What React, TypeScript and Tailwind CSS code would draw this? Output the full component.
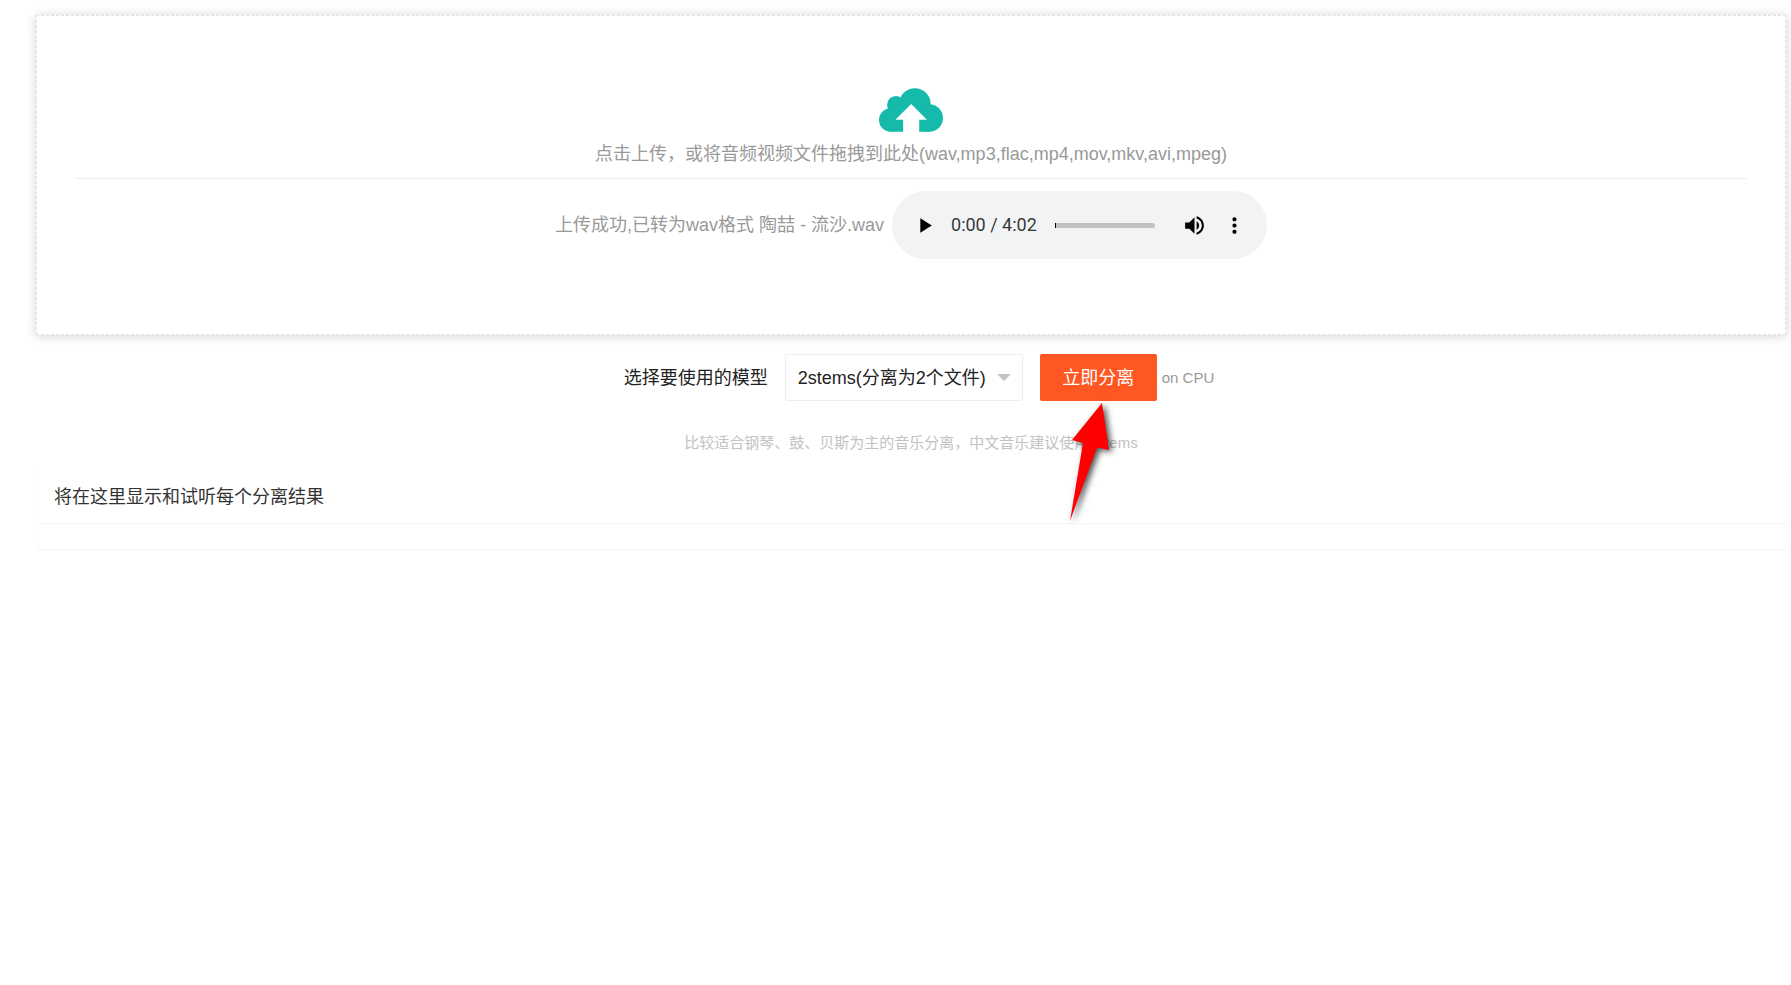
import { useState } from "react";
import { MdMoreVert, MdPlayArrow, MdVolumeUp } from "react-icons/md";

const models = [
  { value: "2stems", label: "2stems(分离为2个文件)" },
  { value: "4stems", label: "4stems(分离为4个文件)" },
  { value: "5stems", label: "5stems(分离为5个文件)" },
];

function CloudUpload() {
  return (
    <svg viewBox="118 53 191 130" className="h-11 w-16" aria-hidden="true">
      <g fill="#16baaa">
        <circle cx="153" cy="148" r="35" />
        <circle cx="169" cy="103" r="27" />
        <circle cx="225" cy="100" r="47" />
        <circle cx="268" cy="142" r="41" />
        <path d="M153 105H268V183H153Z" />
      </g>
      <path d="M214 100L261 147H238V184H190V147H167Z" fill="#fff" />
    </svg>
  );
}

function Player() {
  const [position, setPosition] = useState(0);
  return (
    <div className="flex h-[68px] w-[375px] items-center rounded-full bg-[#f1f3f4] px-5 text-black">
      <button type="button" aria-label="播放">
        <MdPlayArrow size={25} />
      </button>
      <span className="ml-3.5 w-[104px] text-left font-['Roboto',sans-serif] text-lg leading-7 text-black/80">
        0:00 / 4:02
      </span>
      <input
        type="range"
        aria-label="播放进度"
        min={0}
        max={242}
        value={position}
        onChange={(e) => setPosition(Number(e.target.value))}
        className="h-[5px] min-w-0 flex-1 appearance-none overflow-hidden rounded-r-full bg-[#c1c2c3] [&::-webkit-slider-thumb]:h-[5px] [&::-webkit-slider-thumb]:w-px [&::-webkit-slider-thumb]:appearance-none [&::-webkit-slider-thumb]:bg-black"
      />
      <button type="button" aria-label="静音" className="ml-[27px]">
        <MdVolumeUp size={25} />
      </button>
      <button type="button" aria-label="更多选项" className="ml-[15px]">
        <MdMoreVert size={25} />
      </button>
    </div>
  );
}

function PointerArrow() {
  return (
    <svg
      viewBox="0 0 60 130"
      className="pointer-events-none absolute top-full left-5 h-[130px] w-[60px] overflow-visible drop-shadow-[3px_2px_3px_rgba(0,0,0,0.7)]"
      aria-hidden="true"
    >
      <path d="M42 2L49 49L37 46.5L10 120L23 42L12 39Z" fill="#f00" />
    </svg>
  );
}

export default function App() {
  const [model, setModel] = useState("2stems");
  return (
    <main className="min-h-screen pt-[15px] pr-[5px] pb-4 pl-9 font-['Liberation_Sans','Noto_Sans_CJK_SC',sans-serif] text-lg leading-7 text-[#333]">
      <section className="border border-dashed border-[#e2e2e2] bg-white px-[38px] pt-[72px] pb-[75px] text-center text-[#999] shadow-[0_1px_10px_rgba(0,0,0,0.18)]">
        <label className="flex cursor-pointer flex-col items-center gap-2">
          <CloudUpload />
          <span>点击上传，或将音频视频文件拖拽到此处(wav,mp3,flac,mp4,mov,mkv,avi,mpeg)</span>
          <input type="file" className="sr-only" />
        </label>
        <hr className="mt-2.5 mb-3 border-[#eee]" />
        <div className="flex items-center justify-center gap-2">
          <p>上传成功,已转为wav格式 陶喆 - 流沙.wav</p>
          <Player />
        </div>
      </section>

      <form className="mt-[19px]" onSubmit={(e) => e.preventDefault()}>
        <div className="flex items-center justify-center">
          <label htmlFor="model" className="pr-[17px] pl-4 text-[#222]">
            选择要使用的模型
          </label>
          <div className="relative mr-[17px] w-[238px]">
            <select
              id="model"
              value={model}
              onChange={(e) => setModel(e.target.value)}
              className="h-[47px] w-full appearance-none rounded-xs border border-[#eee] bg-white pl-3 text-[#222]"
            >
              {models.map((m) => (
                <option key={m.value} value={m.value}>
                  {m.label}
                </option>
              ))}
            </select>
            <span className="pointer-events-none absolute top-5 right-3 border-x-[7px] border-t-[7px] border-x-transparent border-t-[#c2c2c2]" />
          </div>
          <div className="relative">
            <button type="submit" className="h-[47px] w-[117px] rounded-xs bg-[#ff5722] text-white">
              立即分离
            </button>
            <PointerArrow />
          </div>
          <span className="ml-[5px] text-[15px] text-[#999]">on CPU</span>
        </div>
        <p className="mt-7 text-center text-[15px] text-[#c2c2c2]">
          比较适合钢琴、鼓、贝斯为主的音乐分离，中文音乐建议使用2stems
        </p>
      </form>

      <section className="mt-3.5 rounded-xs bg-white pb-[25px] shadow-[0_1px_2px_rgba(0,0,0,0.06)]">
        <h2 className="border-b border-[#f6f6f6] px-[18px] py-3">将在这里显示和试听每个分离结果</h2>
      </section>
    </main>
  );
}
